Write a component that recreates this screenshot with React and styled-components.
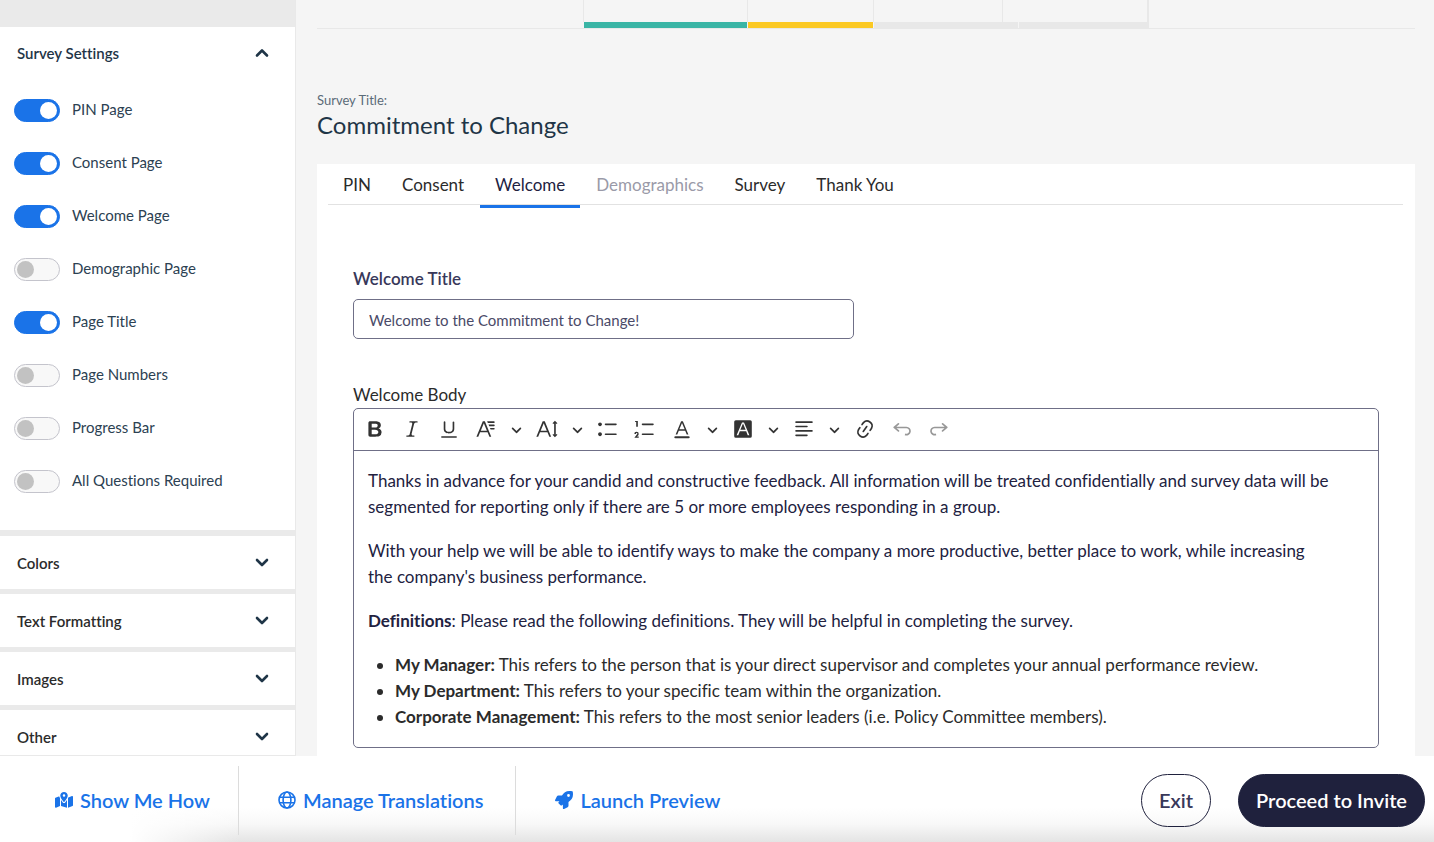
import React, { useState } from "react";
import styled, { createGlobalStyle } from "styled-components";
import { FaMapLocationDot } from "react-icons/fa6";
import { FaRocket } from "react-icons/fa";

const GlobalStyle = createGlobalStyle`
  * {
    box-sizing: border-box;
  }

  body {
    margin: 0;
    background-color: #f5f5f5;
    color: #2b2b2b;
    font-family: Lato, "Liberation Sans", sans-serif;
    font-size: 17px;
    font-variant-ligatures: none;
  }

  button,
  input {
    font: inherit;
    font-variant-ligatures: none;
    color: inherit;
  }
`;

const Shell = styled.div`
  display: flex;
  flex-direction: column;
  height: 100vh;
`;

const Workspace = styled.div`
  display: flex;
  flex: 1;
  min-height: 0;
`;

const Sidebar = styled.aside`
  width: 296px;
  flex-shrink: 0;
  overflow: hidden;
  background-color: #fff;
  border-right: 1px solid #e9e9e9;
  border-bottom: 1px solid #e9e9e9;
`;

const SidebarCap = styled.div`
  height: 27px;
  background-color: #eaeaea;
`;

const Panel = styled.section`
  border-bottom: ${(props) => (props.$open ? 6 : 5)}px solid #eaeaea;
`;

const PanelHeader = styled.button`
  display: flex;
  align-items: center;
  justify-content: space-between;
  width: 100%;
  height: ${(props) => (props.$open ? 51 : 53)}px;
  padding: 0 25px 0 17px;
  border: none;
  background-color: transparent;
  color: ${(props) => (props.$open ? "#1f3547" : "#2b2b2b")};
  font-size: 15px;
  font-weight: 600;
  text-align: left;
  cursor: pointer;
`;

const PanelChevron = styled.svg`
  width: 16px;
  height: 16px;
  fill: none;
  stroke: #1f3547;
  stroke-width: 2.6;
  stroke-linecap: round;
  stroke-linejoin: round;
`;

const ToggleList = styled.div`
  display: flex;
  flex-direction: column;
  gap: 30px;
  padding: 21px 14px 37px;
`;

const ToggleRow = styled.label`
  display: flex;
  gap: 12px;
  height: 23px;
  color: #2c4152;
  font-size: 15px;
  line-height: 20px;
  cursor: pointer;
`;

const ToggleInput = styled.input`
  appearance: none;
  display: flex;
  align-items: center;
  width: 46px;
  height: 23px;
  margin: 0;
  padding: 0 2px;
  border: 1px solid #c4c4cc;
  border-radius: 12px;
  background-color: #f8f8f8;
  cursor: pointer;

  &::before {
    content: "";
    width: 17px;
    height: 17px;
    border-radius: 50%;
    background-color: #c2c2c2;
  }

  &:checked {
    justify-content: flex-end;
    border-color: #1a73e8;
    background-color: #1a73e8;
  }

  &:checked::before {
    background-color: #fff;
  }
`;

const Main = styled.main`
  flex: 1;
  min-width: 0;
  overflow: hidden;
  padding: 0 19px 0 21px;
`;

const Steps = styled.div`
  display: flex;
  flex-direction: column;
  align-items: center;
  border-bottom: 1px solid #e8e8e8;
`;

const StepRow = styled.div`
  display: flex;
`;

const StepCell = styled.div`
  width: ${(props) => props.$width}px;
  height: 22px;
  border-left: 1px solid #e8e8e8;

  &:last-child {
    border-right: 2px solid #e8e8e8;
  }
`;

const StepBar = styled.div`
  width: ${(props) => props.$width}px;
  height: 6px;
  border-left: 1px solid #f5f5f5;
  background-color: ${(props) => props.$color};
`;

const TitleBlock = styled.header`
  padding: 62px 0 23px;
`;

const TitleCaption = styled.div`
  color: #5b6b78;
  font-size: 13px;
  line-height: 18px;
`;

const SurveyTitle = styled.h1`
  margin: 0;
  color: #1f3547;
  font-size: 24px;
  font-weight: 400;
  line-height: 32px;
`;

const Card = styled.div`
  padding: 0 12px 40px 11px;
  background-color: #fff;
`;

const TabList = styled.nav`
  display: flex;
  gap: 1px;
  height: 41px;
  border-bottom: 1px solid #e2e2e2;
`;

const Tab = styled.button`
  height: 44px;
  padding: 0 15px;
  border: none;
  border-bottom: 3px solid ${(props) => (props.$active ? "#1a73e8" : "transparent")};
  background-color: transparent;
  color: ${(props) => (props.$active ? "#22223f" : "#2b2b2b")};
  line-height: 41px;
  cursor: pointer;

  &:disabled {
    color: #9a9aa8;
    cursor: default;
  }
`;

const Form = styled.div`
  padding: 61px 24px 0 25px;
`;

const FieldLabel = styled.label`
  display: block;
  margin-bottom: 8px;
  color: #38385a;
  font-weight: 600;
  line-height: 25px;
`;

const TitleInput = styled.input`
  display: block;
  width: 501px;
  max-width: 100%;
  height: 40px;
  margin-bottom: 42px;
  padding: 2px 16px 0 15px;
  border: 1px solid #6f6f87;
  border-radius: 5px;
  background-color: #fff;
  color: #4a4a68;
  font-size: 15px;
`;

const EditorLabel = styled.div`
  color: #2b2b2b;
  line-height: 27px;
`;

const Editor = styled.div`
  border: 1px solid #6f6f87;
  border-radius: 5px;
`;

const Toolbar = styled.div`
  display: flex;
  height: 42px;
  padding: 1px 2px;
  border-bottom: 1px solid #6f6f87;
`;

const ToolButton = styled.button`
  display: flex;
  align-items: center;
  justify-content: center;
  width: ${(props) => (props.$arrow ? 24 : 37)}px;
  height: 38px;
  padding: 0;
  border: none;
  background-color: transparent;
  color: #333;
  cursor: pointer;

  &:disabled {
    opacity: 0.5;
  }
`;

const ToolIcon = styled.svg`
  width: ${(props) => props.$size}px;
  height: ${(props) => props.$size}px;
  fill: currentColor;
  fill-rule: evenodd;
`;

const EditorBody = styled.div`
  padding: 17px 14px;
  color: #22223f;
  line-height: 26px;

  p {
    margin: 0 0 18px;
  }

  ul {
    margin: 0;
    padding-left: 27px;
    color: #2b2b2b;
  }
`;

const Footer = styled.footer`
  display: flex;
  align-items: center;
  justify-content: space-between;
  height: 86px;
  padding: 2px 9px 0 0;
  background: linear-gradient(to right, #fff 130px, transparent 240px),
    linear-gradient(to top, #e4e4e4, #f8f8f8 18px, #fff 34px);
`;

const FooterLinks = styled.div`
  display: flex;
`;

const FooterLink = styled.a`
  display: flex;
  align-items: center;
  gap: 7px;
  height: 69px;
  padding: 0 32px 0 39px;
  border-right: 1px solid #dcdcdc;
  color: #1a73e8;
  font-size: 20px;
  font-weight: 600;
  text-decoration: none;

  &:first-child {
    padding: 0 28px 0 55px;
  }

  &:last-child {
    border-right: none;
  }

  svg {
    width: 18px;
    height: 18px;
  }
`;

const FooterActions = styled.div`
  display: flex;
  gap: 27px;
`;

const PillButton = styled.button`
  height: 53px;
  padding: 0 17px;
  border: 1px solid #1f213d;
  border-radius: 27px;
  background-color: ${(props) => (props.$primary ? "#1f213d" : "transparent")};
  color: ${(props) => (props.$primary ? "#fff" : "#38385a")};
  font-size: 20px;
  font-weight: 600;
  cursor: pointer;
`;

const icons = {
  bold: "M10.187 17H5.773c-.637 0-1.092-.138-1.364-.415-.273-.277-.409-.718-.409-1.323V4.738c0-.617.14-1.062.419-1.332.279-.27.73-.406 1.354-.406h4.68c.69 0 1.288.041 1.793.124.506.083.96.242 1.36.478.341.197.644.447.906.75a3.262 3.262 0 0 1 .808 2.162c0 1.401-.722 2.426-2.167 3.075C15.05 10.175 16 11.315 16 13.01a3.756 3.756 0 0 1-2.296 3.504 6.1 6.1 0 0 1-1.517.377c-.571.073-1.238.11-2 .11zm-.217-6.217H7v4.087h3.069c1.977 0 2.965-.69 2.965-2.072 0-.707-.256-1.22-.768-1.537-.512-.319-1.277-.478-2.296-.478zM7 5.13v3.619h2.606c.729 0 1.292-.067 1.69-.2a1.6 1.6 0 0 0 .91-.765c.165-.267.247-.566.247-.897 0-.707-.26-1.176-.778-1.409-.519-.232-1.31-.348-2.375-.348H7z",
  italic: "m9.586 14.633.021.004c-.036.335.095.655.393.962.082.083.173.15.274.201h1.474a.6.6 0 1 1 0 1.2H5.304a.6.6 0 0 1 0-1.2h1.15c.474-.07.809-.182 1.005-.334.157-.122.291-.32.404-.597l2.416-9.55a1.053 1.053 0 0 0-.281-.823 1.12 1.12 0 0 0-.442-.296H8.15a.6.6 0 0 1 0-1.2h6.443a.6.6 0 1 1 0 1.2h-1.195c-.376.056-.65.155-.823.296-.215.175-.423.439-.623.79l-2.366 9.347z",
  underline: "M3 18v-1.5h14V18zm2.2-8V3.6c0-.4.4-.6.8-.6.3 0 .7.2.7.6v6.2c0 2 1.3 2.8 3.2 2.8 1.9 0 3.4-.9 3.4-2.9V3.6c0-.3.4-.5.8-.5.3 0 .7.2.7.5V10c0 2.7-2.2 4-4.9 4-2.6 0-4.7-1.2-4.7-4z",
  fontFamily: "M11.03 3h6.149a.75.75 0 1 1 0 1.5h-5.514L11.03 3zm1.27 3h4.879a.75.75 0 1 1 0 1.5h-4.244L12.3 6zm1.27 3h3.609a.75.75 0 1 1 0 1.5h-2.973L13.57 9zm-2.754 2.5L8.038 4.785 5.261 11.5h5.555zm.62 1.5H4.641l-1.666 4.028H1.312l5.789-14h1.875l5.789 14h-1.663L11.436 13z",
  fontSize: "M9.816 11.5 7.038 4.785 4.261 11.5h5.555zm.62 1.5H3.641l-1.666 4.028H.312l5.789-14h1.875l5.789 14h-1.663L10.436 13zm7.55 2.279.779-.779.707.707-2.265 2.265-2.193-2.265.707-.707.765.765V4.825c0-.042 0-.083.002-.123l-.77.77-.707-.707L17.207 2.5l2.265 2.265-.707.707-.782-.782c.002.043.003.089.003.135v10.454z",
  bulletedList: "M7 5.75c0 .414.336.75.75.75h9.5a.75.75 0 1 0 0-1.5h-9.5a.75.75 0 0 0-.75.75zm-6 0C1 4.784 1.777 4 2.75 4c.966 0 1.75.777 1.75 1.75 0 .966-.777 1.75-1.75 1.75C1.784 7.5 1 6.723 1 5.75zm6 9c0 .414.336.75.75.75h9.5a.75.75 0 1 0 0-1.5h-9.5a.75.75 0 0 0-.75.75zm-6 0c0-.966.777-1.75 1.75-1.75.966 0 1.75.777 1.75 1.75 0 .966-.777 1.75-1.75 1.75-.966 0-1.75-.777-1.75-1.75z",
  numberedList: "M7 5.75c0 .414.336.75.75.75h9.5a.75.75 0 1 0 0-1.5h-9.5a.75.75 0 0 0-.75.75zM3.5 3v5H2V3.7H1v-1h2.5V3zM.343 17.857l2.59-3.257H2.92a.6.6 0 1 0-1.04 0H.302a2 2 0 1 1 3.995 0h-.001c-.048.405-.16.734-.333.988-.175.254-.59.692-1.244 1.312H4.3v1h-4l.043-.043zM7 14.75a.75.75 0 0 1 .75-.75h9.5a.75.75 0 1 1 0 1.5h-9.5a.75.75 0 0 1-.75-.75z",
  fontColor: "M12.4 10.3 10 4.5l-2.4 5.8h4.8zm.5 1.2H7.1L5.7 15H4.2l5-12h1.6l5 12h-1.5L12.9 11.5zm3.1 7H4a1 1 0 0 1 0-2h12a1 1 0 0 1 0 2z",
  fontBackground: "M3.5 2h13A1.5 1.5 0 0 1 18 3.5v13a1.5 1.5 0 0 1-1.5 1.5h-13A1.5 1.5 0 0 1 2 16.5v-13A1.5 1.5 0 0 1 3.5 2zm9.4 10 1.4 3.6h1.5L10.9 4H9.1L4.2 15.6h1.5L7.1 12zm-.5-1.3H7.6L10 5z",
  alignLeft: "M2 3.75c0 .414.336.75.75.75h14.5a.75.75 0 1 0 0-1.5H2.75a.75.75 0 0 0-.75.75zm0 8c0 .414.336.75.75.75h14.5a.75.75 0 1 0 0-1.5H2.75a.75.75 0 0 0-.75.75zm0 4c0 .414.336.75.75.75h9.929a.75.75 0 1 0 0-1.5H2.75a.75.75 0 0 0-.75.75zm0-8c0 .414.336.75.75.75h9.929a.75.75 0 1 0 0-1.5H2.75a.75.75 0 0 0-.75.75z",
  link: "m11.077 15 .991-1.416a.75.75 0 1 1 1.229.86l-1.148 1.64a.748.748 0 0 1-.217.206 5.251 5.251 0 0 1-8.503-5.955.741.741 0 0 1 .12-.274l1.147-1.639a.75.75 0 1 1 1.228.86L4.933 10.7l.006.003a3.75 3.75 0 0 0 6.132 4.294l.006.004zm5.494-5.335a.748.748 0 0 1-.12.274l-1.147 1.639a.75.75 0 1 1-1.228-.86l.86-1.23a3.75 3.75 0 0 0-6.144-4.301l-.86 1.229a.75.75 0 0 1-1.229-.86l1.148-1.64a.748.748 0 0 1 .217-.206 5.251 5.251 0 0 1 8.503 5.955zm-4.563-2.532a.75.75 0 0 1 .184 1.045l-3.155 4.505a.75.75 0 1 1-1.229-.86l3.155-4.506a.75.75 0 0 1 1.045-.184z",
  undo: "m5.042 9.367 2.189 1.837a.75.75 0 0 1-.965 1.149l-3.788-3.18a.747.747 0 0 1-.21-.284.75.75 0 0 1 .17-.945L6.23 4.762a.75.75 0 1 1 .964 1.15L4.863 7.866h8.917A.75.75 0 0 1 14 7.9a4 4 0 1 1-1.477 7.718l.344-1.489a2.5 2.5 0 1 0 1.094-4.73l.008-.032H5.042z",
  redo: "m14.958 9.367-2.189 1.837a.75.75 0 0 0 .965 1.149l3.788-3.18a.747.747 0 0 0 .21-.284.75.75 0 0 0-.17-.945L13.77 4.762a.75.75 0 1 0-.964 1.15l2.331 1.955H6.22A.75.75 0 0 0 6 7.9a4 4 0 1 0 1.477 7.718l-.344-1.489A2.5 2.5 0 1 1 6.039 9.4l-.008-.032h8.927z",
  arrow: "M.941 4.523a.75.75 0 1 1 1.06-1.06l3.006 3.005 3.005-3.005a.75.75 0 1 1 1.06 1.06l-3.549 3.55a.75.75 0 0 1-1.168-.136L.941 4.523z",
};

const tools = [
  { icon: "bold", label: "Bold" },
  { icon: "italic", label: "Italic" },
  { icon: "underline", label: "Underline" },
  { icon: "fontFamily", label: "Font Family", menu: true },
  { icon: "fontSize", label: "Font Size", menu: true },
  { icon: "bulletedList", label: "Bulleted List" },
  { icon: "numberedList", label: "Numbered List" },
  { icon: "fontColor", label: "Font Color", menu: true },
  { icon: "fontBackground", label: "Font Background Color", menu: true },
  { icon: "alignLeft", label: "Text alignment", menu: true },
  { icon: "link", label: "Link" },
  { icon: "undo", label: "Undo", disabled: true },
  { icon: "redo", label: "Redo", disabled: true },
];

const settings = [
  { name: "PIN Page", on: true },
  { name: "Consent Page", on: true },
  { name: "Welcome Page", on: true },
  { name: "Demographic Page", on: false },
  { name: "Page Title", on: true },
  { name: "Page Numbers", on: false },
  { name: "Progress Bar", on: false },
  { name: "All Questions Required", on: false },
];

const tabs = ["PIN", "Consent", "Welcome", "Demographics", "Survey", "Thank You"];

const stepCells = [164, 126, 129, 147];

const stepBars = [
  { width: 164, color: "#3ab5a5" },
  { width: 126, color: "#fbc924" },
  { width: 145, color: "#e8e8e8" },
  { width: 131, color: "#e8e8e8" },
];

function Chevron({ open }) {
  return (
    <PanelChevron viewBox="0 0 16 16" aria-hidden="true">
      <path d={open ? "M3 10.5l5-5 5 5" : "M3 5l5 5 5-5"} />
    </PanelChevron>
  );
}

function GlobeIcon() {
  return (
    <svg viewBox="0 0 18 18" fill="none" stroke="currentColor" strokeWidth="1.6" aria-hidden="true">
      <circle cx="9" cy="9" r="8" />
      <ellipse cx="9" cy="9" rx="3.9" ry="8" />
      <path d="M1.5 6.3h15M1.5 11.7h15" />
    </svg>
  );
}

function SettingsSidebar() {
  const [values, setValues] = useState(settings.map((item) => item.on));

  const handleToggle = (index) => {
    setValues(values.map((value, i) => (i === index ? !value : value)));
  };

  return (
    <Sidebar>
      <SidebarCap />
      <Panel $open>
        <PanelHeader $open aria-expanded="true">
          Survey Settings
          <Chevron open />
        </PanelHeader>
        <ToggleList>
          {settings.map((item, index) => (
            <ToggleRow key={item.name}>
              <ToggleInput
                type="checkbox"
                checked={values[index]}
                onChange={() => handleToggle(index)}
              />
              {item.name}
            </ToggleRow>
          ))}
        </ToggleList>
      </Panel>
      {["Colors", "Text Formatting", "Images", "Other"].map((name) => (
        <Panel key={name}>
          <PanelHeader aria-expanded="false">
            {name}
            <Chevron />
          </PanelHeader>
        </Panel>
      ))}
    </Sidebar>
  );
}

function EditorToolbar() {
  return (
    <Toolbar role="toolbar" aria-label="Editor toolbar">
      {tools.map((tool) => (
        <React.Fragment key={tool.icon}>
          <ToolButton aria-label={tool.label} disabled={tool.disabled}>
            <ToolIcon $size={22} viewBox="0 0 20 20">
              <path d={icons[tool.icon]} />
            </ToolIcon>
          </ToolButton>
          {tool.menu && (
            <ToolButton $arrow aria-label={`${tool.label} options`}>
              <ToolIcon $size={11} viewBox="0 0 10 10">
                <path d={icons.arrow} />
              </ToolIcon>
            </ToolButton>
          )}
        </React.Fragment>
      ))}
    </Toolbar>
  );
}

function App() {
  const [activeTab, setActiveTab] = useState("Welcome");
  const [title, setTitle] = useState("Welcome to the Commitment to Change!");

  return (
    <Shell>
      <GlobalStyle />
      <Workspace>
        <SettingsSidebar />
        <Main>
          <Steps>
            <StepRow>
              {stepCells.map((width) => (
                <StepCell key={width} $width={width} />
              ))}
            </StepRow>
            <StepRow>
              {stepBars.map((bar) => (
                <StepBar key={bar.width} $width={bar.width} $color={bar.color} />
              ))}
            </StepRow>
          </Steps>
          <TitleBlock>
            <TitleCaption>Survey Title:</TitleCaption>
            <SurveyTitle>Commitment to Change</SurveyTitle>
          </TitleBlock>
          <Card>
            <TabList>
              {tabs.map((tab) => (
                <Tab
                  key={tab}
                  $active={tab === activeTab}
                  disabled={tab === "Demographics"}
                  onClick={() => setActiveTab(tab)}
                >
                  {tab}
                </Tab>
              ))}
            </TabList>
            <Form>
              <FieldLabel htmlFor="welcome-title">Welcome Title</FieldLabel>
              <TitleInput
                id="welcome-title"
                type="text"
                value={title}
                onChange={(e) => setTitle(e.target.value)}
              />
              <EditorLabel id="welcome-body">Welcome Body</EditorLabel>
              <Editor>
                <EditorToolbar />
                <EditorBody
                  role="textbox"
                  aria-multiline="true"
                  aria-labelledby="welcome-body"
                  contentEditable
                  suppressContentEditableWarning
                  spellCheck={false}
                >
                  <p>
                    Thanks in advance for your candid and constructive feedback. All information
                    will be treated confidentially and survey data will be segmented for reporting
                    only if there are 5 or more employees responding in a group.
                  </p>
                  <p>
                    With your help we will be able to identify ways to make the company a more
                    productive, better place to work, while increasing the&nbsp;company's business
                    performance.
                  </p>
                  <p>
                    <strong>Definitions</strong>: Please read the following definitions. They will
                    be helpful in completing the survey.
                  </p>
                  <ul>
                    <li>
                      <strong>My Manager:</strong> This refers to the person that is your direct
                      supervisor and completes your annual performance review.
                    </li>
                    <li>
                      <strong>My Department:</strong> This refers to your specific team within the
                      organization.
                    </li>
                    <li>
                      <strong>Corporate Management:</strong> This refers to the most senior leaders
                      (i.e. Policy Committee members).
                    </li>
                  </ul>
                </EditorBody>
              </Editor>
            </Form>
          </Card>
        </Main>
      </Workspace>
      <Footer>
        <FooterLinks>
          <FooterLink href="#show-me-how">
            <FaMapLocationDot />
            Show Me How
          </FooterLink>
          <FooterLink href="#translations">
            <GlobeIcon />
            Manage Translations
          </FooterLink>
          <FooterLink href="#preview">
            <FaRocket />
            Launch Preview
          </FooterLink>
        </FooterLinks>
        <FooterActions>
          <PillButton>Exit</PillButton>
          <PillButton $primary>Proceed to Invite</PillButton>
        </FooterActions>
      </Footer>
    </Shell>
  );
}

export default App;
